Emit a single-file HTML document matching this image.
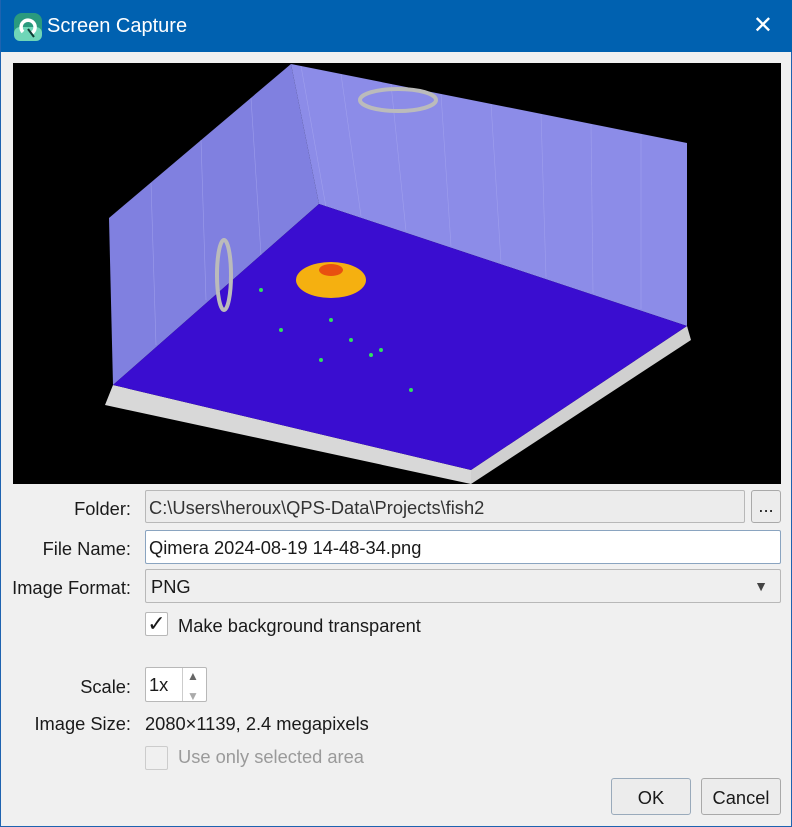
<!DOCTYPE html>
<html><head><meta charset="utf-8"><style>
*{margin:0;padding:0;box-sizing:border-box}
body{width:792px;height:827px;background:#f0f0f0;font-family:"Liberation Sans",sans-serif;font-size:18.3px;color:#1a1a1a;position:relative;overflow:hidden;border:1px solid #1e63b0;border-top:none}
.title{position:absolute;left:0;top:0;width:792px;height:52px;background:#0061b0;color:#fff}
.title .t{position:absolute;left:46px;top:15px;font-size:20px}
.title .x{position:absolute;right:20px;top:11px;font-size:24px;font-weight:300}
.lbl{position:absolute;right:660px;text-align:right;white-space:nowrap}
.box{position:absolute;border:1px solid #b8b8b8;border-radius:2px;background:#fff;padding-left:3px;line-height:33px}
.btn{position:absolute;border:1px solid #a9a9a9;border-radius:3px;background:#ececec;text-align:center}
</style></head><body>
<div class="title">
<svg style="position:absolute;left:13px;top:13px" width="28" height="28"><rect width="28" height="28" rx="8" fill="#2a9a7e"/><rect y="14" width="28" height="14" rx="6" fill="#6fd6b8"/><path d="M9 19a7 7 0 1 1 9 1" stroke="#fff" stroke-width="3.5" fill="none"/><path d="M14 16l6 8" stroke="#0e3b34" stroke-width="2"/></svg>
<span class="t">Screen Capture</span><span class="x">✕</span></div>
<svg style="position:absolute;left:12px;top:63px" width="768" height="421" viewBox="12 63 768 421">
<rect x="12" y="63" width="768" height="421" fill="#000"/>
<polygon points="108,218 290,64 318,204 112,385" fill="#8080e0"/>
<polygon points="290,64 686,143 686,326 318,204" fill="#8c8ce8"/>
<g stroke="#a8a8f0" stroke-width="0.6" opacity="0.7">
<line x1="300" y1="66" x2="325" y2="207"/><line x1="340" y1="74" x2="360" y2="216"/><line x1="390" y1="84" x2="405" y2="231"/><line x1="440" y1="94" x2="450" y2="246"/><line x1="490" y1="104" x2="500" y2="262"/><line x1="540" y1="114" x2="545" y2="277"/><line x1="590" y1="124" x2="592" y2="293"/><line x1="640" y1="134" x2="640" y2="309"/>
<line x1="150" y1="183" x2="155" y2="345"/><line x1="200" y1="140" x2="205" y2="300"/><line x1="250" y1="98" x2="260" y2="255"/>
</g>
<polygon points="104,405 112,385 470,470 470,484 " fill="#d8d8d8"/>
<polygon points="470,470 686,326 690,340 470,484" fill="#d0d0d0"/>
<polygon points="318,204 686,326 470,470 112,385" fill="#3a0dd0"/>
<ellipse cx="330" cy="280" rx="35" ry="18" fill="#f5b010"/>
<ellipse cx="330" cy="270" rx="12" ry="6" fill="#e85010"/>
<g fill="#30e060"><circle cx="330" cy="320" r="2"/><circle cx="350" cy="340" r="2"/><circle cx="370" cy="355" r="2"/><circle cx="260" cy="290" r="2"/><circle cx="280" cy="330" r="2"/><circle cx="320" cy="360" r="2"/><circle cx="380" cy="350" r="2"/><circle cx="410" cy="390" r="2"/></g>
<ellipse cx="397" cy="100" rx="38" ry="11" fill="none" stroke="#bbb" stroke-width="4"/>
<ellipse cx="223" cy="275" rx="7" ry="35" fill="none" stroke="#bbb" stroke-width="4"/>
</svg>
<div class="lbl" style="top:498px">Folder:</div>
<div class="box" style="left:144px;top:490px;width:600px;height:33px;background:#ececec;color:#333">C:\Users\heroux\QPS-Data\Projects\fish2</div>
<div class="btn" style="left:750px;top:490px;width:30px;height:33px;line-height:30px">...</div>
<div class="lbl" style="top:538px">File Name:</div>
<div class="box" style="left:144px;top:530px;width:636px;height:34px;border-color:#8aa4c0">Qimera 2024-08-19 14-48-34.png</div>
<div class="lbl" style="top:577px">Image Format:</div>
<div class="box" style="left:144px;top:569px;width:636px;height:34px;background:#efefef;padding-left:5px">PNG<span style="position:absolute;right:12px;font-size:14px;color:#444">▼</span></div>
<div class="box" style="left:144px;top:612px;width:23px;height:24px;padding:0;line-height:22px;font-size:22px;text-align:center">✓</div>
<div style="position:absolute;left:177px;top:615px">Make background transparent</div>
<div class="lbl" style="top:676px">Scale:</div>
<div class="box" style="left:144px;top:667px;width:62px;height:35px">1x<span style="position:absolute;left:36px;top:0;width:1px;height:33px;background:#ccc"></span><span style="position:absolute;left:41px;top:-8px;font-size:12px;color:#666">▲</span><span style="position:absolute;left:41px;top:12px;font-size:12px;color:#aaa">▼</span></div>
<div class="lbl" style="top:713px">Image Size:</div>
<div style="position:absolute;left:144px;top:713px">2080×1139, 2.4 megapixels</div>
<div class="box" style="left:144px;top:746px;width:23px;height:24px;background:#f0f0f0;border-color:#ccc"></div>
<div style="position:absolute;left:177px;top:746px;color:#9a9a9a">Use only selected area</div>
<div class="btn" style="left:610px;top:778px;width:80px;height:37px;line-height:37px;border-color:#9ab">OK</div>
<div class="btn" style="left:700px;top:778px;width:80px;height:37px;line-height:37px">Cancel</div>
</body></html>
